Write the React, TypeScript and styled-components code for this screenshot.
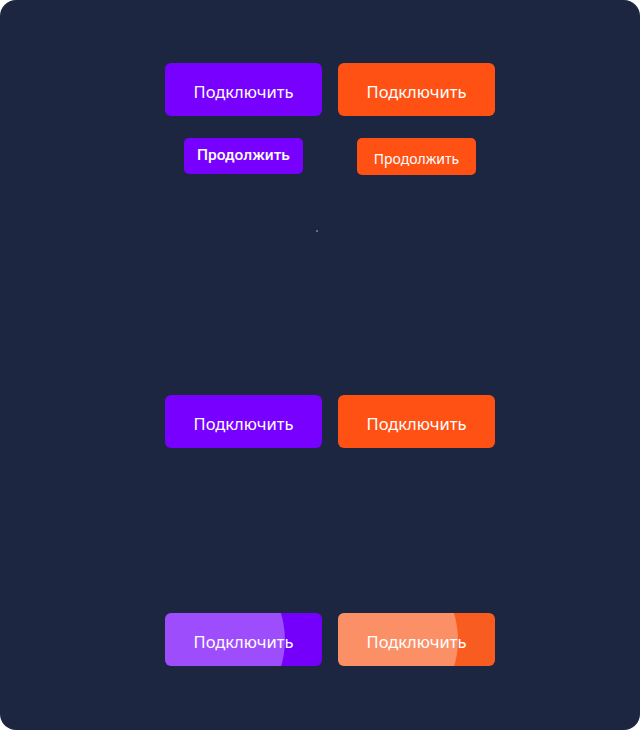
import React from 'react';
import styled, { createGlobalStyle, css } from 'styled-components';

const GlobalStyle = createGlobalStyle`
    html, body {
        margin: 0;
        padding: 0;
        background: #ffffff;
    }
    body {
        font-family: 'Noto Sans', 'Open Sans', sans-serif;
    }
`;

type Tone = 'violet' | 'orange';

const palette: Record<Tone, { base: string; pressed: string; glow: string }> = {
    violet: { base: '#7700ff', pressed: '#7400fb', glow: 'rgba(255, 255, 255, 0.3)' },
    orange: { base: '#ff5114', pressed: '#f95c20', glow: 'rgba(255, 255, 255, 0.32)' },
};

const Board = styled.div`
    box-sizing: border-box;
    width: 640px;
    height: 730px;
    background: #1d2640;
    border-radius: 16px;
    display: flex;
    flex-direction: column;
    align-items: center;
    padding: 63px 0 0 20px;
`;

const Row = styled.div<{ $gap?: number; $top?: number }>`
    display: flex;
    align-items: flex-start;
    gap: ${(p) => p.$gap ?? 16}px;
    margin-top: ${(p) => p.$top ?? 0}px;
`;

const BigButton = styled.button<{ $tone: Tone; $pressed?: boolean }>`
    position: relative;
    overflow: hidden;
    width: 157px;
    height: 53px;
    border: none;
    border-radius: 6px;
    background: ${(p) => (p.$pressed ? palette[p.$tone].pressed : palette[p.$tone].base)};
    color: #ffffff;
    font-family: 'Noto Sans', 'Open Sans', sans-serif;
    font-size: 16.5px;
    font-weight: 400;
    cursor: pointer;
    padding: 3px 0 0;

    ${(p) =>
        p.$pressed &&
        css`
            &::before {
                content: '';
                position: absolute;
                left: -60px;
                top: 50%;
                width: 180px;
                height: 180px;
                margin-top: -90px;
                border-radius: 50%;
                background: ${palette[p.$tone].glow};
            }
        `}
`;

const Label = styled.span`
    position: relative;
`;

const SmallButton = styled.button<{ $tone: Tone; $bold?: boolean }>`
    width: 119px;
    height: ${(p) => (p.$bold ? 36 : 37)}px;
    border: none;
    border-radius: 5px;
    background: ${(p) => palette[p.$tone].base};
    color: #ffffff;
    font-family: ${(p) => (p.$bold ? 'Roboto' : "'Noto Sans'")}, sans-serif;
    font-size: ${(p) => (p.$bold ? 15.5 : 14)}px;
    font-weight: ${(p) => (p.$bold ? 500 : 400)};
    padding: ${(p) => (p.$bold ? '0 0 2px' : '3px 0 0')};
    cursor: pointer;
`;

const Speck = styled.span`
    width: 2px;
    height: 2px;
    margin: 55px 26px 0 0;
    background: #7d879c;
    border-radius: 1px;
`;

export default function App() {
    return (
        <>
            <GlobalStyle />
            <Board>
                <Row>
                    <BigButton $tone="violet">Подключить</BigButton>
                    <BigButton $tone="orange">Подключить</BigButton>
                </Row>
                <Row $gap={54} $top={22}>
                    <SmallButton $tone="violet" $bold>
                        Продолжить
                    </SmallButton>
                    <SmallButton $tone="orange">Продолжить</SmallButton>
                </Row>
                <Speck />
                <Row $top={163}>
                    <BigButton $tone="violet">Подключить</BigButton>
                    <BigButton $tone="orange">Подключить</BigButton>
                </Row>
                <Row $top={165}>
                    <BigButton $tone="violet" $pressed>
                        <Label>Подключить</Label>
                    </BigButton>
                    <BigButton $tone="orange" $pressed>
                        <Label>Подключить</Label>
                    </BigButton>
                </Row>
            </Board>
        </>
    );
}
